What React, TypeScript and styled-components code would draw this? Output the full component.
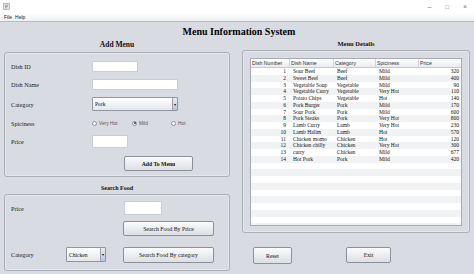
import React from 'react';
import styled, { createGlobalStyle } from 'styled-components';

const Global = createGlobalStyle`
  html, body { margin: 0; padding: 0; }
  body {
    width: 474px; height: 274px; overflow: hidden;
    background: #d8dbe2;
    font-family: "Liberation Serif", "Times New Roman", serif;
  }
  * { box-sizing: border-box; }
`;

const Window = styled.div`
  width: 474px; height: 274px;
  display: flex; flex-direction: column;
  background: #d8dbe2;
`;

const TitleBar = styled.div`
  height: 13px; background: #fff;
  display: flex; align-items: center; justify-content: space-between;
  padding: 0 7px 0 3px;
`;

const Controls = styled.div`
  display: flex; align-items: center; gap: 14px;
  font-family: "Liberation Sans", Arial, sans-serif; font-size: 7px; color: #777;
`;

const MenuBar = styled.div`
  height: 9px;
  background: linear-gradient(#ffffff, #eef0f3);
  border-bottom: 1px solid #b6bac2;
  display: flex; align-items: center; gap: 3px;
  padding-left: 4px;
  font-family: "Liberation Sans", Arial, sans-serif; font-size: 5px; color: #222;
`;

const Main = styled.div`
  flex: 1;
  display: flex; flex-direction: column;
  padding-left: 4px;
`;

const AppTitle = styled.div`
  height: 18px;
  display: flex; align-items: center; justify-content: center;
  font-weight: bold; font-size: 10px; color: #000;
  padding-top: 1px;
`;

const Columns = styled.div`
  display: grid;
  grid-template-columns: 226px 228px;
  column-gap: 12px;
`;

const Column = styled.div`
  display: flex; flex-direction: column;
`;

const SectionHeading = styled.div<{ $h: number; $size: number }>`
  height: ${p => p.$h}px;
  display: flex; align-items: flex-end; justify-content: center;
  padding-bottom: 3px;
  font-weight: bold; font-size: ${p => p.$size}px; color: #111;
`;

const Panel = styled.div<{ $h: number }>`
  height: ${p => p.$h}px;
  border: 1px solid #a9aeb7;
  border-radius: 3px;
  box-shadow: inset 0 0 0 1px rgba(255,255,255,0.35);
`;

const AddForm = styled.div`
  display: flex; flex-direction: column;
  padding: 8px 0 0 6px;
`;

const FormRow = styled.div<{ $h: number; $mt: number }>`
  height: ${p => p.$h}px;
  margin-top: ${p => p.$mt}px;
  display: grid;
  grid-template-columns: 81px 1fr;
  align-items: center;
`;

const Label = styled.span`
  font-size: 6.2px; color: #222;
`;

const Field = styled.div<{ $w: number; $h: number }>`
  width: ${p => p.$w}px; height: ${p => p.$h}px;
  background: #fff;
  border: 1px solid #c9cdd4;
`;

const Combo = styled.div<{ $w: number; $h: number }>`
  width: ${p => p.$w}px; height: ${p => p.$h}px;
  display: flex; align-items: stretch;
  background: linear-gradient(#ffffff, #e4e7ec);
  border: 1px solid #8f96a2;
  border-radius: 1px;
`;

const ComboText = styled.span`
  flex: 1;
  display: flex; align-items: center;
  padding-left: 2px;
  font-size: 5.6px; color: #111;
`;

const ComboArrow = styled.span`
  width: 5px;
  display: flex; align-items: center; justify-content: center;
  background: linear-gradient(#e9eef6, #b9c4d6);
  border-left: 1px solid #98a2b2;
  font-size: 4px; color: #111;
  font-family: "DejaVu Sans", sans-serif;
`;

const Radios = styled.div`
  display: flex; align-items: center;
`;

const RadioItem = styled.label<{ $w: number }>`
  width: ${p => p.$w}px;
  display: flex; align-items: center; gap: 2px;
  font-family: "Liberation Sans", Arial, sans-serif;
  font-size: 4.8px; color: #555;
`;

const RadioCircle = styled.span<{ $on?: boolean }>`
  width: 5px; height: 5px; border-radius: 50%;
  border: 1px solid #8d929b;
  background: #fafafa;
  display: flex; align-items: center; justify-content: center;
  &::after {
    content: "";
    width: 2px; height: 2px; border-radius: 50%;
    background: ${p => (p.$on ? '#333' : 'transparent')};
  }
`;

const Button = styled.div<{ $w: number; $h: number; $bold?: boolean }>`
  width: ${p => p.$w}px; height: ${p => p.$h}px;
  display: flex; align-items: center; justify-content: center;
  background: linear-gradient(#fcfcfd, #e9ebee 55%, #dcdfe4);
  border: 1px solid #8b919b;
  border-radius: 2px;
  font-size: ${p => (p.$bold ? 5.7 : 5.8)}px;
  font-weight: ${p => (p.$bold ? 'bold' : 'normal')};
  color: #111;
`;

const ButtonSlot = styled.div`
  padding-left: 32px;
`;

const SearchGrid = styled.div`
  display: grid;
  grid-template-columns: 55px 57px 92px;
  grid-template-rows: 14px 15px 16px;
  row-gap: 6px;
  align-items: center;
  padding: 6px 0 0 6px;
`;

const Cell = styled.div<{ $col: number; $row: number; $mt?: number; $ml?: number }>`
  grid-column: ${p => p.$col};
  grid-row: ${p => p.$row};
  margin-top: ${p => p.$mt ?? 0}px;
  margin-left: ${p => p.$ml ?? 0}px;
  display: flex; align-items: center;
`;

const TableBox = styled.div`
  margin: 7px 7px 0 7px;
  height: 168px;
  background: #fff;
  border: 1px solid #a7acb4;
  overflow: hidden;
  font-size: 5.5px;
`;

const cols = '39px 44px 42px 43px 42px';

const HeaderRow = styled.div`
  display: grid;
  grid-template-columns: ${cols};
  height: 9px;
  background: linear-gradient(#ffffff, #e9ebef);
  border-bottom: 1px solid #c5c9d0;
`;

const HeaderCell = styled.div`
  display: flex; align-items: center;
  padding-left: 1px;
  border-right: 1px solid #d3d6dc;
  font-family: "Liberation Sans", Arial, sans-serif;
  font-size: 5.2px; color: #333;
  white-space: nowrap; overflow: hidden;
  &:last-child { border-right: none; }
`;

const Row = styled.div<{ $alt: boolean }>`
  display: grid;
  grid-template-columns: ${cols};
  height: 6.75px;
  background: ${p => (p.$alt ? '#f1f2f3' : '#ffffff')};
`;

const TD = styled.div<{ $right?: boolean; $pr?: number }>`
  display: flex; align-items: center;
  justify-content: ${p => (p.$right ? 'flex-end' : 'flex-start')};
  padding-left: ${p => (p.$right ? 0 : 3)}px;
  padding-right: ${p => p.$pr ?? 0}px;
  font-size: 5.5px; line-height: 6.75px; color: #111;
  white-space: nowrap; overflow: hidden;
`;

const BottomButtons = styled.div`
  display: flex; align-items: flex-start;
  margin-top: 14px;
  padding-left: 11px;
  gap: 54px;
`;

const data: [number, string, string, string, number][] = [
  [1, 'Sour Beef', 'Beef', 'Mild', 320],
  [2, 'Sweet Beef', 'Beef', 'Mild', 400],
  [3, 'Vegetable Soup', 'Vegetable', 'Mild', 90],
  [4, 'Vegetable Curry', 'Vegetable', 'Very Hot', 110],
  [5, 'Potato Chips', 'Vegetable', 'Hot', 140],
  [6, 'Pork Burger', 'Pork', 'Mild', 170],
  [7, 'Sour Pork', 'Pork', 'Mild', 600],
  [8, 'Pork Steaks', 'Pork', 'Very Hot', 800],
  [9, 'Lamb Curry', 'Lamb', 'Very Hot', 230],
  [10, 'Lamb Halim', 'Lamb', 'Hot', 570],
  [11, 'Chicken momo', 'Chicken', 'Hot', 120],
  [12, 'Chicken chilly', 'Chicken', 'Very Hot', 300],
  [13, 'curry', 'Chicken', 'Mild', 677],
  [14, 'Hot Pork', 'Pork', 'Mild', 420],
];

const JavaIcon = () => (
  <svg width="7" height="7" viewBox="0 0 7 7">
    <rect x="0.5" y="0.5" width="6" height="6" fill="#e6e6e6" stroke="#9a9a9a" strokeWidth="0.6" />
    <path d="M2 2.2 h3 M2 3.5 h3 M2 4.8 h2" stroke="#777" strokeWidth="0.6" />
  </svg>
);

export default function App() {
  const rows = Array.from({ length: 26 }, (_, i) => data[i]);
  return (
    <Window>
      <Global />
      <TitleBar>
        <JavaIcon />
        <Controls>
          <span>–</span>
          <span style={{ fontSize: 6 }}>□</span>
          <span>×</span>
        </Controls>
      </TitleBar>
      <MenuBar>
        <span>File</span>
        <span>Help</span>
      </MenuBar>
      <Main>
        <AppTitle>Menu Information System</AppTitle>
        <Columns>
          <Column>
            <SectionHeading $h={12} $size={7.5}>Add Menu</SectionHeading>
            <Panel $h={125}>
              <AddForm>
                <FormRow $h={11} $mt={0}>
                  <Label>Dish ID</Label>
                  <Field $w={46} $h={11} />
                </FormRow>
                <FormRow $h={11} $mt={7}>
                  <Label>Dish Name</Label>
                  <Field $w={86} $h={11} />
                </FormRow>
                <FormRow $h={14} $mt={7}>
                  <Label>Category</Label>
                  <Combo $w={86} $h={14}>
                    <ComboText>Pork</ComboText>
                    <ComboArrow>▾</ComboArrow>
                  </Combo>
                </FormRow>
                <FormRow $h={10} $mt={7}>
                  <Label>Spiciness</Label>
                  <Radios>
                    <RadioItem $w={40}><RadioCircle />Very Hot</RadioItem>
                    <RadioItem $w={39}><RadioCircle $on />Mild</RadioItem>
                    <RadioItem $w={20}><RadioCircle />Hot</RadioItem>
                  </Radios>
                </FormRow>
                <FormRow $h={13} $mt={7}>
                  <Label>Price</Label>
                  <Field $w={36} $h={13} />
                </FormRow>
                <FormRow $h={15} $mt={8}>
                  <span />
                  <ButtonSlot>
                    <Button $w={69} $h={15} $bold>Add To Menu</Button>
                  </ButtonSlot>
                </FormRow>
              </AddForm>
            </Panel>
            <SectionHeading $h={17} $size={6}>Search Food</SectionHeading>
            <Panel $h={77}>
              <SearchGrid>
                <Cell $col={1} $row={1}><Label>Price</Label></Cell>
                <Cell $col={3} $row={1} $ml={1}><Field $w={38} $h={14} /></Cell>
                <Cell $col={3} $row={2}><Button $w={91} $h={15}>Search Food By Price</Button></Cell>
                <Cell $col={1} $row={3} $mt={8}><Label>Category</Label></Cell>
                <Cell $col={2} $row={3} $mt={9}>
                  <Combo $w={40} $h={15}>
                    <ComboText>Chicken</ComboText>
                    <ComboArrow>▾</ComboArrow>
                  </Combo>
                </Cell>
                <Cell $col={3} $row={3} $mt={9}><Button $w={91} $h={16}>Search Food By category</Button></Cell>
              </SearchGrid>
            </Panel>
          </Column>
          <Column>
            <SectionHeading $h={10} $size={6.5}>Menu Details</SectionHeading>
            <Panel $h={183}>
              <TableBox>
                <HeaderRow>
                  <HeaderCell>Dish Number</HeaderCell>
                  <HeaderCell>Dish Name</HeaderCell>
                  <HeaderCell>Category</HeaderCell>
                  <HeaderCell>Spiciness</HeaderCell>
                  <HeaderCell>Price</HeaderCell>
                </HeaderRow>
                {rows.map((r, i) => (
                  <Row key={i} $alt={i % 2 === 1}>
                    <TD $right $pr={4}>{r ? r[0] : ''}</TD>
                    <TD>{r ? r[1] : ''}</TD>
                    <TD>{r ? r[2] : ''}</TD>
                    <TD>{r ? r[3] : ''}</TD>
                    <TD $right $pr={2}>{r ? r[4] : ''}</TD>
                  </Row>
                ))}
              </TableBox>
            </Panel>
            <BottomButtons>
              <Button $w={39} $h={17}>Reset</Button>
              <Button $w={45} $h={16}>Exit</Button>
            </BottomButtons>
          </Column>
        </Columns>
      </Main>
    </Window>
  );
}
